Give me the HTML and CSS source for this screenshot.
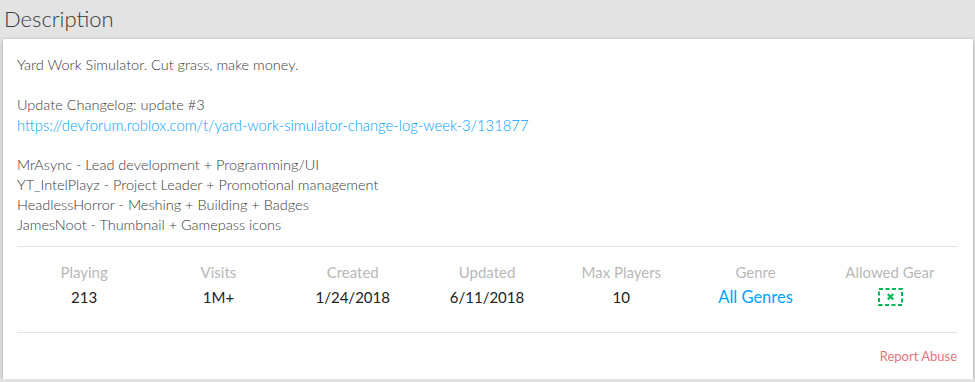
FILE: index.html
```html
<!DOCTYPE html>
<html lang="en">
<head>
    <meta charset="UTF-8">
    <title>Description</title>
    <link rel="stylesheet" href="styles.css">
</head>
<body>
<div class="section">
    <h2 class="section-title">Description</h2>
    <div class="card">
        <p class="description">Yard Work Simulator. Cut grass, make money.<br>
<br>
Update Changelog: update #3<br>
<a href="#">https://devforum.roblox.com/t/yard-work-simulator-change-log-week-3/131877</a><br>
<br>
MrAsync - Lead development + Programming/UI<br>
YT_IntelPlayz - Project Leader + Promotional management<br>
HeadlessHorror - Meshing + Building + Badges<br>
JamesNoot - Thumbnail + Gamepass icons</p>

        <ul class="stats">
            <li class="stat">
                <p class="stat-label">Playing</p>
                <p class="stat-value">213</p>
            </li>
            <li class="stat">
                <p class="stat-label">Visits</p>
                <p class="stat-value">1M+</p>
            </li>
            <li class="stat">
                <p class="stat-label">Created</p>
                <p class="stat-value">1/24/2018</p>
            </li>
            <li class="stat">
                <p class="stat-label">Updated</p>
                <p class="stat-value">6/11/2018</p>
            </li>
            <li class="stat">
                <p class="stat-label">Max Players</p>
                <p class="stat-value">10</p>
            </li>
            <li class="stat">
                <p class="stat-label">Genre</p>
                <p class="stat-value"><a class="genre-link" href="#">All Genres</a></p>
            </li>
            <li class="stat">
                <p class="stat-label">Allowed Gear</p>
                <div class="stat-value">
                    <svg class="gear-icon" width="25" height="18" viewBox="0 0 25 18">
                        <rect x="1" y="1" width="23" height="16" fill="none" stroke="#02b757" stroke-width="2" stroke-dasharray="4 2.5"/>
                        <path d="M9.8 6l5.4 5.6M15.2 6l-5.4 5.6" stroke="#02b757" stroke-width="2.2"/>
                    </svg>
                </div>
            </li>
        </ul>

        <div class="report">
            <a class="report-link" href="#">Report Abuse</a>
        </div>
    </div>
</div>
</body>
</html>
```

FILE: styles.css
```css
* {
    box-sizing: border-box;
    margin: 0;
    padding: 0;
}

body {
    background-color: #e3e3e3;
    font-family: Lato, "Open Sans", sans-serif;
    color: #393b3d;
}

a {
    text-decoration: none;
}

.section {
    padding: 0 2px 0 3px;
}

.section-title {
    font-size: 22px;
    font-weight: 300;
    line-height: 34px;
    padding-top: 2px;
    height: 39px;
    color: #393b3d;
    padding-left: 1px;
}

.card {
    background-color: #fff;
    box-shadow: 0 1px 4px rgba(0, 0, 0, 0.3);
    padding: 16px 16px 0 14px;
    height: 340px;
}

.description {
    font-size: 14.5px;
    font-weight: 300;
    line-height: 20px;
    color: #393b3d;
    padding-bottom: 11px;
    border-bottom: 1px solid #e3e3e3;
}

.description a {
    color: #00a2ff;
    font-size: 14.8px;
    vertical-align: top;
}

.stats {
    list-style: none;
    display: grid;
    grid-template-columns: repeat(7, 1fr);
    text-align: center;
    padding: 15px 0 20px;
    border-bottom: 1px solid #e3e3e3;
}

.stat-label {
    font-size: 15px;
    line-height: 20px;
    color: #b8b8b8;
}

.stat-value {
    font-size: 15px;
    line-height: 22px;
    margin-top: 4px;
    color: #222;
    height: 24px;
}

.genre-link {
    color: #00a2ff;
    font-size: 16.5px;
}

.gear-icon {
    display: block;
    margin: 6px auto 0;
    position: relative;
    left: 1px;
}

.report {
    text-align: right;
    padding-top: 12px;
}

.report-link {
    font-size: 13px;
    color: #e2767a;
}
```
